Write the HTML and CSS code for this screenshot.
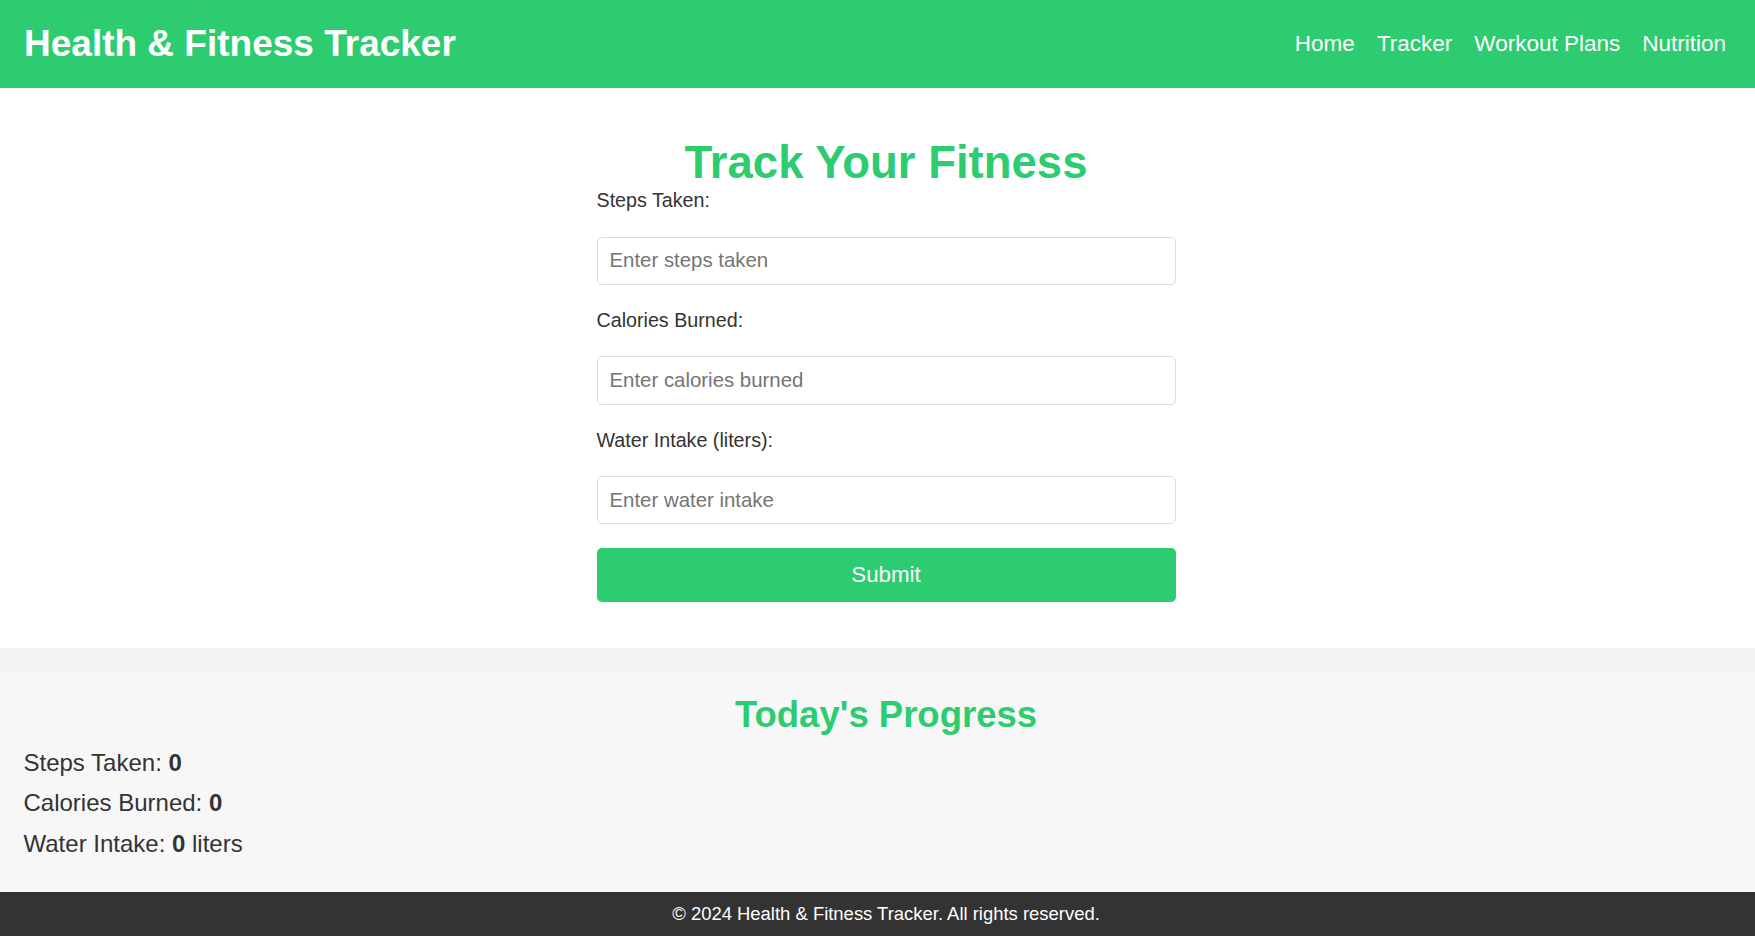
FILE: index.html
```html
<!DOCTYPE html>
<html lang="en">
<head>
<meta charset="utf-8">
<title>Health &amp; Fitness Tracker</title>
<link rel="stylesheet" href="styles.css">
</head>
<body>
<header class="site-header">
  <h1 class="brand">Health &amp; Fitness Tracker</h1>
  <nav class="nav">
    <a href="#" class="nav-link">Home</a>
    <a href="#" class="nav-link">Tracker</a>
    <a href="#" class="nav-link">Workout Plans</a>
    <a href="#" class="nav-link">Nutrition</a>
  </nav>
</header>
<main class="tracker">
  <div class="tracker-inner">
    <h2 class="tracker-title">Track Your Fitness</h2>
    <form class="form">
      <label class="form-label" for="steps">Steps Taken:</label>
      <input class="form-input" id="steps" type="number" placeholder="Enter steps taken">
      <label class="form-label" for="calories">Calories Burned:</label>
      <input class="form-input" id="calories" type="number" placeholder="Enter calories burned">
      <label class="form-label" for="water">Water Intake (liters):</label>
      <input class="form-input form-input-last" id="water" type="number" placeholder="Enter water intake">
      <button class="submit" type="button">Submit</button>
    </form>
  </div>
</main>
<section class="progress">
  <h2 class="progress-title">Today's Progress</h2>
  <p class="progress-line">Steps Taken: <strong>0</strong></p>
  <p class="progress-line">Calories Burned: <strong>0</strong></p>
  <p class="progress-line">Water Intake: <strong>0</strong> liters</p>
</section>
<footer class="footer">
  <p class="footer-text">&copy; 2024 Health &amp; Fitness Tracker. All rights reserved.</p>
</footer>
</body>
</html>
```
FILE: styles.css
```css
* { box-sizing: border-box; }
html, body { margin: 0; padding: 0; }
body {
  font-family: "Liberation Sans", Arial, sans-serif;
  color: #333;
  background: #f2f2f2;
  overflow: hidden;
}
.site-header {
  height: 88px;
  background: #2ecc71;
  color: #fff;
  display: flex;
  align-items: center;
  justify-content: space-between;
  padding: 0 29px 0 24px;
}
.brand {
  margin: 0;
  font-size: 37px;
  font-weight: bold;
  line-height: 42px;
}
.nav {
  display: flex;
  gap: 22px;
}
.nav-link {
  color: #fff;
  text-decoration: none;
  font-size: 22.5px;
  line-height: 26px;
}
.tracker {
  background: #fff;
  padding: 49px 0 46px 17px;
}
.tracker-inner {
  width: 579px;
  margin: 0 auto;
}
.tracker-title {
  margin: 0;
  text-align: center;
  color: #2ecc71;
  font-size: 45.5px;
  line-height: 52px;
  font-weight: bold;
}
.form { display: block; }
.form-label {
  display: block;
  font-size: 19.7px;
  line-height: 22.4px;
  margin-bottom: 25.1px;
  color: #333;
}
.form-input {
  display: block;
  width: 100%;
  height: 48.3px;
  margin: 0 0 24px 0;
  padding: 0 12px;
  border: 1px solid #ddd;
  border-radius: 5px;
  font-family: "Liberation Sans", Arial, sans-serif;
  font-size: 20.4px;
  color: #333;
  background: #fff;
}
.form-input::placeholder { color: #757575; }
.form-input-last { margin-bottom: 23.3px; }
.submit {
  display: block;
  width: 100%;
  height: 54px;
  border: none;
  border-radius: 5px;
  background: #2ecc71;
  color: #fff;
  font-family: "Liberation Sans", Arial, sans-serif;
  font-size: 22.3px;
}
.progress {
  margin-top: 23.3px;
  background: #f7f7f7;
  padding: 23px 6.5px 22px 23.5px;
}
.progress-title {
  margin: 0 0 13px 0;
  text-align: center;
  color: #2ecc71;
  font-size: 36.5px;
  line-height: 42px;
  font-weight: bold;
}
.progress-line {
  margin: 0 0 12.7px 0;
  font-size: 24px;
  line-height: 27.6px;
}
.footer {
  background: #333;
  color: #fff;
  text-align: center;
  padding: 11.5px 0 11.5px 17px;
}
.footer-text {
  margin: 0;
  font-size: 18.45px;
  line-height: 21.2px;
}
```
